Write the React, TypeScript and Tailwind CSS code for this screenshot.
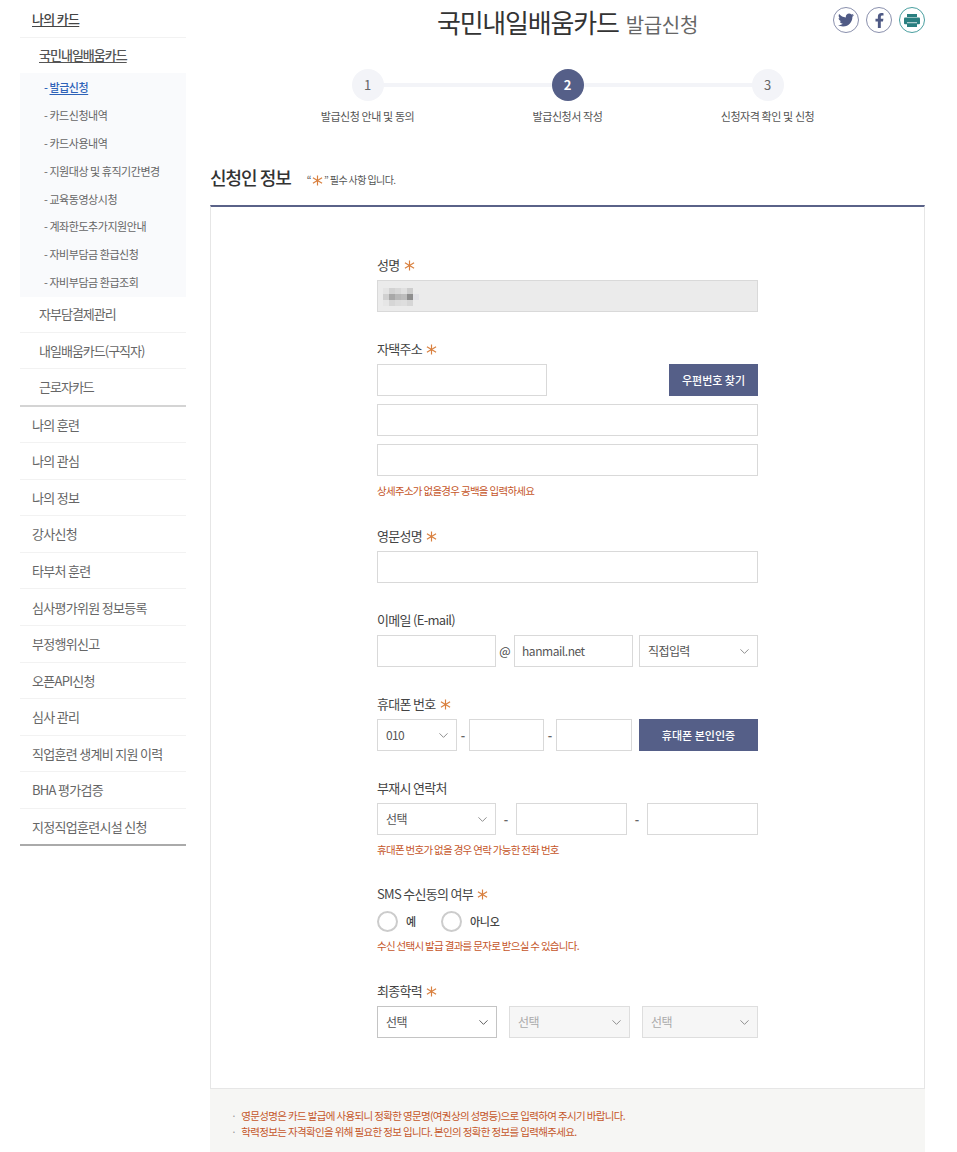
import { ChevronDown } from "lucide-react"
import { FaTwitter, FaFacebookF } from "react-icons/fa"

const subMenu = [
  "카드신청내역",
  "카드사용내역",
  "지원대상 및 휴직기간변경",
  "교육동영상시청",
  "계좌한도추가지원안내",
  "자비부담금 환급신청",
  "자비부담금 환급조회",
]

const cardMenu = [
  { text: "자부담결제관리", height: "h-[35.5px] border-b border-[#f2f2f2] pb-[1px]" },
  { text: "내일배움카드(구직자)", height: "h-[36.5px] border-b border-[#f2f2f2]" },
  { text: "근로자카드", height: "h-[37.5px] border-b-2 border-[#d4d4d4]" },
]

const mainMenu = [
  "나의 훈련",
  "나의 관심",
  "나의 정보",
  "강사신청",
  "타부처 훈련",
  "심사평가위원 정보등록",
  "부정행위신고",
  "오픈API신청",
  "심사 관리",
  "직업훈련 생계비 지원 이력",
  "BHA 평가검증",
  "지정직업훈련시설 신청",
]

// masked name in the reference is a pixel mosaic
const mosaic = [
  "bg-[#e4e4e4]", "bg-[#d2d2d2]", "bg-[#d8d8d8]", "bg-[#e0e0e0]", "bg-[#cdcdcd]", "bg-[#ebebeb]",
  "bg-[#d0d0d0]", "bg-[#a8a8a8]", "bg-[#b8b8b8]", "bg-[#bdbdbd]", "bg-[#8e8e8e]", "bg-[#e2e2e6]",
  "bg-[#e6e6e6]", "bg-[#d6d6d6]", "bg-[#dcdcdc]", "bg-[#dedede]", "bg-[#d6d6d6]", "bg-[#ebebeb]",
]

function Required({ className = "ml-[4px]" }: { className?: string }) {
  return (
    <svg viewBox="0 0 12 12" className={`h-[11px] w-[11px] stroke-[#d9803f] ${className}`} strokeWidth="1.3">
      <path d="M6 0.5V11.5M1 3L11 9M11 3L1 9" />
    </svg>
  )
}

function Label({ text, required }: { text: string; required?: boolean }) {
  return (
    <div className="mb-[5px] flex h-5 items-center text-[13px] tracking-[-0.7px] text-[#444]">
      {text}
      {required && <Required />}
    </div>
  )
}

function Input({ className = "", value }: { className?: string; value?: string }) {
  return (
    <div
      className={`flex h-8 items-center border border-[#d9d9d9] bg-white pl-[7px] text-[12px] tracking-[-0.45px] text-[#555] ${className}`}
    >
      {value}
    </div>
  )
}

function Select({
  className = "",
  value,
  disabled,
  dark,
}: {
  className?: string
  value: string
  disabled?: boolean
  dark?: boolean
}) {
  return (
    <div
      className={`flex h-8 items-center justify-between border pl-2 pr-[5px] text-[12px] tracking-[-0.6px] ${
        disabled ? "border-[#dedede] bg-[#f6f6f6] text-[#aaa]" : "bg-white text-[#555]"
      } ${dark ? "border-[#c4c4c4]" : disabled ? "" : "border-[#d9d9d9]"} ${className}`}
    >
      {value}
      <ChevronDown size={15} strokeWidth={1.5} className={dark ? "text-[#555]" : "text-[#888]"} />
    </div>
  )
}

function Dash({ className = "" }: { className?: string }) {
  return <span className={`text-center text-[12px] font-bold text-[#666] ${className}`}>-</span>
}

function Help({ text, className = "" }: { text: string; className?: string }) {
  return (
    <p className={`h-[14px] text-[10.5px] leading-[14px] tracking-[-0.7px] text-[#c5562a] ${className}`}>{text}</p>
  )
}

function Radio({ text, className = "" }: { text: string; className?: string }) {
  return (
    <div className={`flex items-center ${className}`}>
      <span className="h-[21px] w-[21px] rounded-full border-2 border-[#ccc] bg-white" />
      <span className="ml-2 text-[11px] font-medium tracking-[-0.2px] text-[#444]">{text}</span>
    </div>
  )
}

function Step({ num, text, active }: { num: string; text: string; active?: boolean }) {
  return (
    <div className="z-10 flex w-[200px] flex-col items-center">
      <div
        className={`flex h-8 w-8 items-center justify-center rounded-full text-[13px] ${
          active ? "bg-[#555f88] font-bold text-white" : "bg-[#f3f4f8] text-[#666]"
        }`}
      >
        {num}
      </div>
      <p className="mt-[7px] text-[11px] leading-[16px] tracking-[-0.4px] text-[#555]">{text}</p>
    </div>
  )
}

function SocialIcon({ children, print }: { children: React.ReactNode; print?: boolean }) {
  return (
    <div
      className={`flex h-[26px] w-[26px] items-center justify-center rounded-full border-[1.5px] ${
        print ? "border-[#4a9fa0] text-[#2a7f80]" : "border-[#8a90ad] text-[#4f5a85]"
      }`}
    >
      {children}
    </div>
  )
}

function PrinterIcon() {
  return (
    <svg viewBox="0 0 16 13" className="h-[13px] w-4 fill-current">
      <rect x="3" y="0" width="10" height="3" />
      <rect x="0" y="3.6" width="16" height="6.6" rx="1" />
      <rect x="3" y="8.4" width="10" height="0.8" className="fill-white" />
      <rect x="3" y="9.8" width="10" height="3.2" />
    </svg>
  )
}

export default function App() {
  return (
    <div
      className="flex h-[1152px] overflow-hidden bg-white pl-5"
      style={{ fontFamily: '"Noto Sans CJK KR", "Noto Sans", sans-serif' }}
    >
      {/* sidebar */}
      <aside className="w-[166px] shrink-0 pt-[1px] text-[13px] tracking-[-0.7px] text-[#666]">
        <div className="flex h-[37px] items-center border-b border-[#f2f2f2] pb-[1px] pl-3">
          <span className="font-medium text-[#444] underline underline-offset-2">나의 카드</span>
        </div>
        <div className="flex h-[35px] items-center pb-[1px] pl-[19px]">
          <span className="font-medium tracking-[-1px] text-[#555] underline underline-offset-2">국민내일배움카드</span>
        </div>
        <div className="h-[224px] bg-[#f9fafc] pt-[0.5px] text-[11px] tracking-[-0.45px] text-[#666]">
          <div className="flex h-[28px] items-center pl-[24px] font-medium text-[#2f63b8]">
            -&nbsp;<span className="underline underline-offset-2">발급신청</span>
          </div>
          {subMenu.map((item) => (
            <div key={item} className="flex h-[27.8px] items-center pl-[24px]">
              -&nbsp;{item}
            </div>
          ))}
        </div>
        {cardMenu.map((item) => (
          <div key={item.text} className={`flex items-center pl-[19px] tracking-[-1px] ${item.height}`}>
            {item.text}
          </div>
        ))}
        {mainMenu.map((item, i) => (
          <div
            key={item}
            className={`flex h-[36.6px] items-center pl-3 ${
              i === mainMenu.length - 1 ? "border-b-2 border-[#aaa]" : "border-b border-[#f2f2f2]"
            }`}
          >
            {item}
          </div>
        ))}
      </aside>

      {/* main */}
      <main className="ml-6 w-[715px] shrink-0">
        <div className="relative flex h-[43px] items-center justify-center">
          <h1 className="text-[26px] font-normal leading-none tracking-[-1.2px] text-[#333]">
            국민내일배움카드
            <span className="ml-[7px] text-[20px] font-normal tracking-[-0.3px] text-[#666]">발급신청</span>
          </h1>
          <div className="absolute right-0 top-[7px] flex gap-[7px]">
            <SocialIcon>
              <FaTwitter size={16} />
            </SocialIcon>
            <SocialIcon>
              <FaFacebookF size={15} />
            </SocialIcon>
            <SocialIcon print>
              <PrinterIcon />
            </SocialIcon>
          </div>
        </div>

        {/* steps */}
        <div className="relative mt-[26px] flex justify-center">
          <div className="absolute left-[157px] top-[14px] h-1 w-[401px] bg-[#f3f4f8]" />
          <Step num="1" text="발급신청 안내 및 동의" />
          <Step num="2" text="발급신청서 작성" active />
          <Step num="3" text="신청자격 확인 및 신청" />
        </div>

        <div className="mt-[41px] flex h-[40px] items-start">
          <h2 className="text-[18px] font-medium leading-[24px] tracking-[-1px] text-[#333]">신청인 정보</h2>
          <p className="ml-4 mt-[7px] flex items-center text-[10px] leading-[16px] tracking-[-0.6px] text-[#555]">
            “<Required className="mx-px" />”&nbsp;필수 사항 입니다.
          </p>
        </div>

        {/* form */}
        <div className="border-x border-b border-t-2 border-x-[#e6e6e6] border-b-[#e6e6e6] border-t-[#5a6288] pb-[50px] pl-[166px] pt-[48px]">
          <div className="w-[381px]">
            <Label text="성명" required />
            <div className="relative h-8 border border-[#d9d9d9] bg-[#ebebeb]">
              <div className="absolute left-[5px] top-[7px] grid grid-cols-[repeat(6,6px)] grid-rows-[repeat(3,6px)]">
                {mosaic.map((color, i) => (
                  <div key={i} className={color} />
                ))}
              </div>
            </div>

            <div className="mt-[27px]">
              <Label text="자택주소" required />
              <div className="flex justify-between">
                <Input className="w-[170px]" />
                <div className="flex h-8 w-[89px] items-center justify-center bg-[#555f88] text-[11px] font-medium tracking-[0px] text-white">
                  우편번호 찾기
                </div>
              </div>
              <Input className="mt-2" />
              <Input className="mt-2" />
              <Help className="mt-2" text="상세주소가 없을경우 공백을 입력하세요" />
            </div>

            <div className="mt-[28px]">
              <Label text="영문성명" required />
              <Input />
            </div>

            <div className="mt-[27px]">
              <Label text="이메일 (E-mail)" />
              <div className="flex">
                <Input className="w-[119px]" />
                <span className="flex w-[18px] items-center justify-center text-[12px] text-[#444]">@</span>
                <Input className="w-[119px]" value="hanmail.net" />
                <Select className="ml-[6px] w-[119px]" value="직접입력" />
              </div>
            </div>

            <div className="mt-[27px]">
              <Label text="휴대폰 번호" required />
              <div className="flex items-center">
                <Select className="w-[80px]" value="010" />
                <Dash className="w-3" />
                <Input className="w-[75px]" />
                <Dash className="w-3" />
                <Input className="w-[76px]" />
                <div className="ml-[7px] flex h-8 w-[119px] items-center justify-center bg-[#555f88] text-[11px] font-medium tracking-[0px] text-white">
                  휴대폰 본인인증
                </div>
              </div>
            </div>

            <div className="mt-[27px]">
              <Label text="부재시 연락처" />
              <div className="flex items-center">
                <Select className="w-[119px]" value="선택" />
                <Dash className="w-5" />
                <Input className="w-[111px]" />
                <Dash className="w-5" />
                <Input className="w-[111px]" />
              </div>
              <Help className="mt-[8px]" text="휴대폰 번호가 없을 경우 연락 가능한 전화 번호" />
            </div>

            <div className="mt-[27px]">
              <Label text="SMS 수신동의 여부" required />
              <div className="flex h-6 items-center">
                <Radio text="예" />
                <Radio text="아니오" className="ml-[25px]" />
              </div>
              <Help className="mt-[6px]" text="수신 선택시 발급 결과를 문자로 받으실 수 있습니다." />
            </div>

            <div className="mt-[28px]">
              <Label text="최종학력" required />
              <div className="flex">
                <Select className="w-[120px]" value="선택" dark />
                <Select className="ml-3 w-[121px]" value="선택" disabled />
                <Select className="ml-3 w-[116px]" value="선택" disabled />
              </div>
            </div>
          </div>
        </div>

        {/* notice */}
        <div className="flex h-[70px] gap-[5px] bg-[#f6f6f4] pl-[21px] pt-[19px] text-[10.5px] leading-[16px] tracking-[-0.65px] text-[#c5562a]">
          <div className="text-[#999]">
            <p>·</p>
            <p>·</p>
          </div>
          <div>
            <p>영문성명은 카드 발급에 사용되니 정확한 영문명(여권상의 성명등)으로 입력하여 주시기 바랍니다.</p>
            <p>학력정보는 자격확인을 위해 필요한 정보 입니다. 본인의 정확한 정보를 입력해주세요.</p>
          </div>
        </div>
      </main>
    </div>
  )
}
